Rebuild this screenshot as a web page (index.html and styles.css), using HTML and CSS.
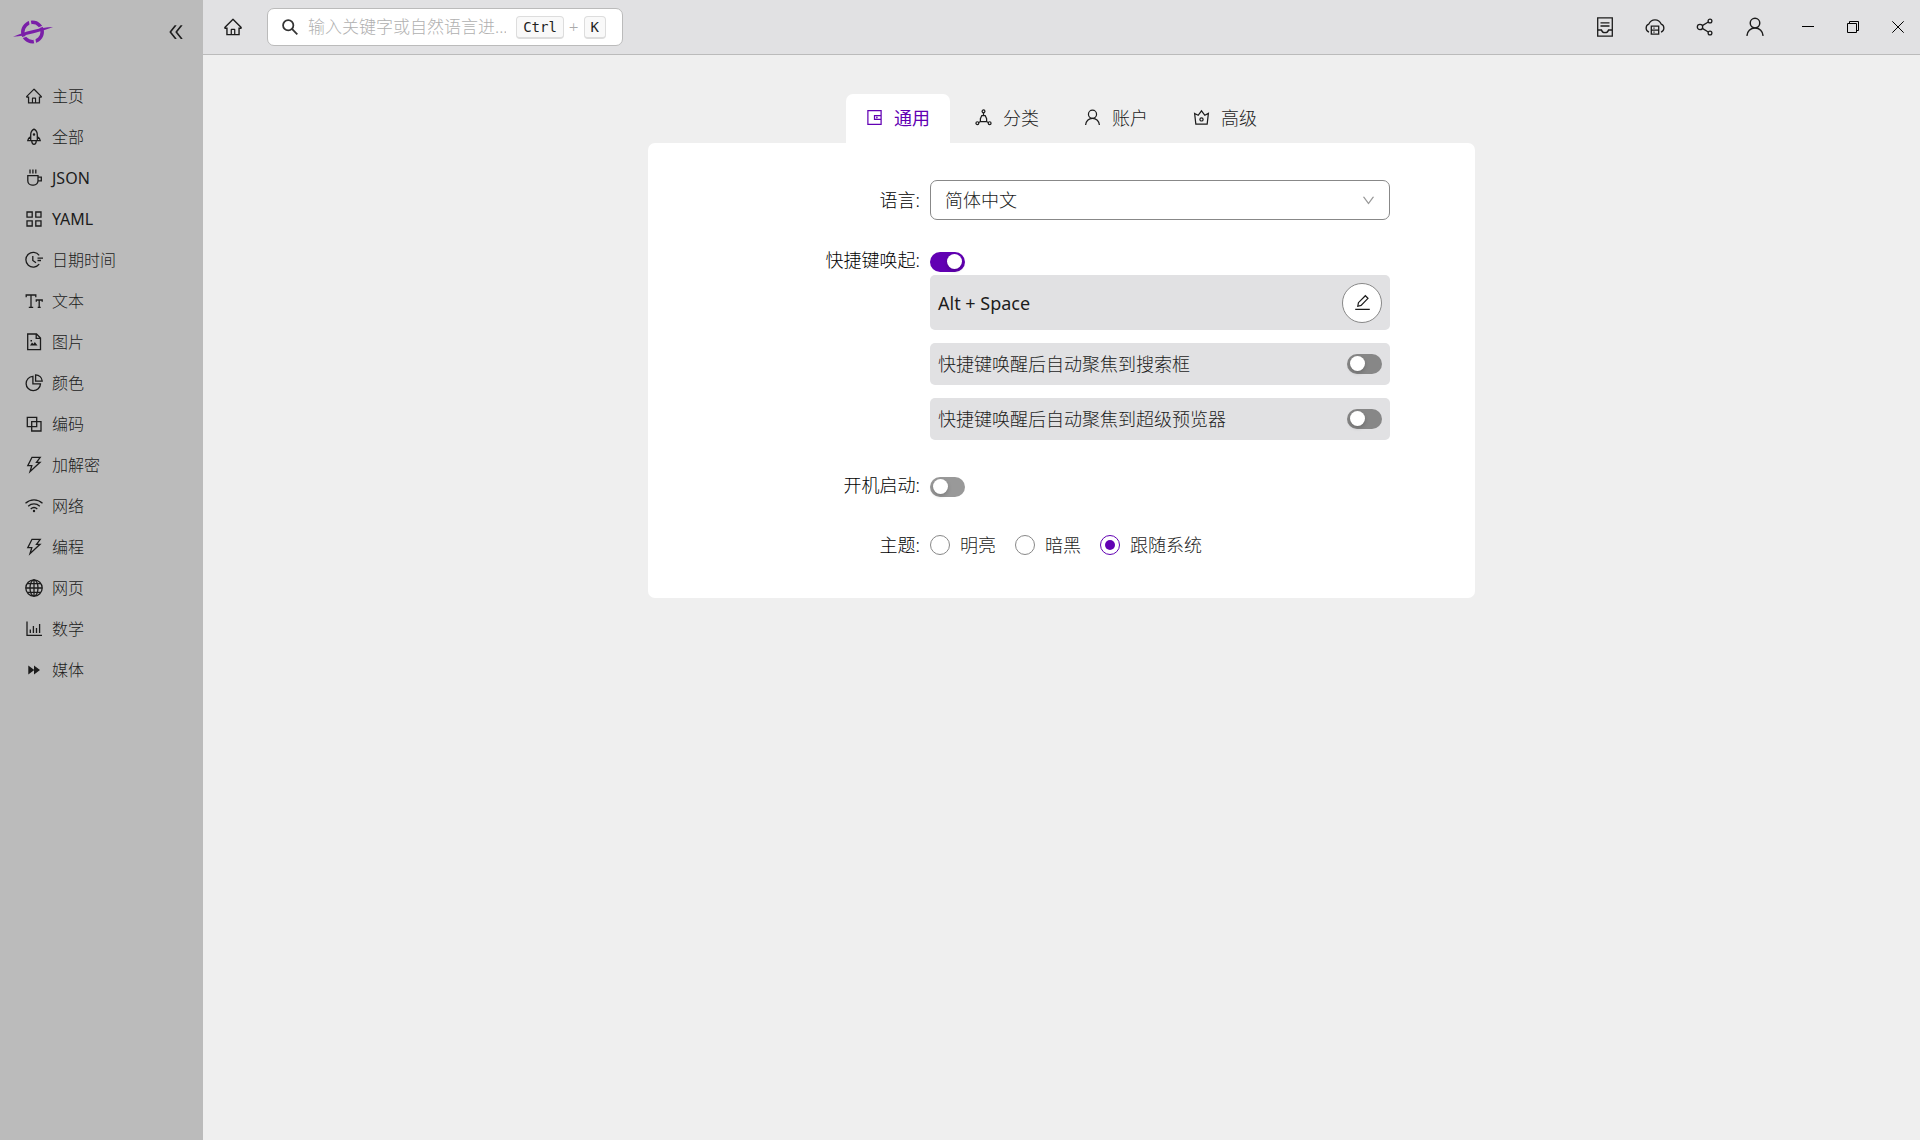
FILE: index.html
```html
<!DOCTYPE html>
<html lang="zh-CN">
<head>
<meta charset="utf-8">
<meta name="viewport" content="width=device-width, initial-scale=1">
<title>设置</title>
<link rel="stylesheet" href="styles.css">
</head>
<body>
<svg class="sprite" aria-hidden="true">
  <symbol id="home" viewBox="0 0 1024 1024"><path fill="currentColor" stroke="none" d="M946.500 505L560.100 118.800l-25.900-25.900a31.500 31.500 0 0 0-44.400 0L77.500 505a63.900 63.900 0 0 0-18.800 46c.4 35.200 29.700 63.300 64.900 63.300h42.500V940h691.800V614.300h43.400c17.100 0 33.200-6.700 45.300-18.800a63.600 63.600 0 0 0 18.700-45.300c0-17-6.700-33.100-18.800-45.200zM568 868H456V664h112v204zm217.900-325.700V868H632V640c0-22.100-17.900-40-40-40H432c-22.100 0-40 17.900-40 40v228H238.100V542.300h-96l370-369.700 23.100 23.100L882 542.300h-96.100z"/></symbol>
  <symbol id="collapse" viewBox="0 0 1024 1024"><path fill="currentColor" stroke="none" d="M272.900 512l265.400-339.100c4.100-5.200.4-12.900-6.300-12.900h-77.300c-4.900 0-9.600 2.300-12.600 6.100L186.800 492.300a32 32 0 0 0 0 39.500l255.300 326.100c3 3.900 7.700 6.100 12.600 6.100H532c6.700 0 10.400-7.700 6.300-12.900L272.900 512zm304 0l265.400-339.100c4.100-5.200.4-12.900-6.300-12.900h-77.300c-4.900 0-9.600 2.300-12.600 6.100L490.800 492.300a32 32 0 0 0 0 39.500l255.300 326.100c3 3.900 7.700 6.100 12.600 6.100H836c6.700 0 10.400-7.700 6.300-12.900L576.900 512z"/></symbol>
  <symbol id="down" viewBox="0 0 1024 1024"><path fill="currentColor" stroke="none" d="M884 256h-75c-5.100 0-9.900 2.500-12.900 6.600L512 654.200 227.900 262.600c-3-4.100-7.800-6.600-12.900-6.600h-75c-6.500 0-10.300 7.400-6.500 12.700l352.600 486.100c12.800 17.600 39 17.600 51.700 0l352.600-486.100c3.900-5.300.1-12.700-6.400-12.700z"/></symbol>
  <symbol id="rocket" viewBox="0 0 18 18"><path d="M9 1.200C7 2.200 5.700 4.400 5.700 7v5.700h6.600V7C12.300 4.400 11 2.200 9 1.200zM5.700 8.600C4 9.600 2.700 11.400 2.700 12.700h3M12.300 8.600c1.700 1 3 2.800 3 4.100h-3M6.700 13c.2 2 1 3.300 2.300 3.300s2.100-1.300 2.300-3.300"/><circle cx="9" cy="6.500" r=".6" fill="currentColor"/></symbol>
  <symbol id="coffee" viewBox="0 0 18 18"><path d="M5 .5v4M7.900.5v4M10.800.5v4M2.800 6.600H13v5.200a4.300 4.300 0 0 1-4.300 4.300H7.100a4.300 4.300 0 0 1-4.300-4.300zM13 8.200h3.300v3.600H13"/></symbol>
  <symbol id="grid" viewBox="0 0 18 18"><path d="M2 2h5.200v5.200H2zM10.800 2H16v5.200h-5.200zM2 10.800h5.200V16H2zM10.800 10.800H16V16h-5.200z"/></symbol>
  <symbol id="clock" viewBox="0 0 18 18"><path d="M14.200 4.300A7.400 7.400 0 1 0 14.200 13.200M7.800 5v4.500l3.200 2.300M12.500 7.200H18M12.500 9.500H16"/></symbol>
  <symbol id="text" viewBox="0 0 18 18"><path d="M1.200 5.300V3h9.600v2.300M6 3v12.300M3.800 15.300h4.400M11.300 9.700V8h5.900v1.700M14.200 8v7.300M12.700 15.300h3"/></symbol>
  <symbol id="image" viewBox="0 0 18 18"><path d="M2.700 1h8.800l4 4v11.700H2.700zM11.200 1v4.300h4.300"/><path fill="currentColor" stroke="none" d="M5 12.500l2-3 1.500 1.600 1.300-2 2.700 3.400zM5.500 7h1.500v1.500H5.500z"/></symbol>
  <symbol id="pie" viewBox="0 0 18 18"><path d="M7.900 2.300a7.200 7.200 0 1 0 7.600 7.600H7.900zM10.600.8v6.300h6.600A6.600 6.600 0 0 0 10.600.8z"/></symbol>
  <symbol id="overlap" viewBox="0 0 18 18"><path d="M2.300 2.300h9.400v9.400H2.300zM6.700 6.700H16V16H6.700z"/></symbol>
  <symbol id="bolt" viewBox="0 0 18 18"><path d="M7 1.300h8.200L11.500 6.300H15L5 15.700l1.800-6H2.800z"/></symbol>
  <symbol id="wifi" viewBox="0 0 18 18"><path d="M.5 6.300C5.500 1.800 12.500 1.800 17.500 6.300M3.200 9.200c3.400-3 8.200-3 11.600 0M5.700 11.900c2-1.700 4.600-1.700 6.600 0"/><circle cx="9" cy="14" r="1.200" fill="currentColor" stroke="none"/></symbol>
  <symbol id="globe" viewBox="0 0 18 18"><circle cx="9" cy="9" r="8.200"/><ellipse cx="9" cy="9" rx="4" ry="8.200"/><path d="M9 .8v16.400M.8 9h16.400M2.300 4.700h13.400M2.300 13.300h13.400"/></symbol>
  <symbol id="chart" viewBox="0 0 18 18"><path d="M2 1.500v13.800h15M5.300 13V9.500M8.400 13V6M11.500 13V8M14.600 13V4"/></symbol>
  <symbol id="forward" viewBox="0 0 18 18"><path fill="currentColor" stroke="none" d="M3.300 4.500L9 8.700V4.500L15 9l-6 4.500V9.300l-5.700 4.200z"/></symbol>
  <symbol id="user" viewBox="0 0 18 18"><circle cx="9" cy="5.500" r="4.300"/><path d="M1.700 17c.2-4 3.200-7.100 7.300-7.100s7.100 3.100 7.300 7.100"/></symbol>
  <symbol id="wallet" viewBox="0 0 18 18"><path d="M2 1.700h14v14.600H2zM16 6.900H9v4.200h7"/><circle cx="11.500" cy="9" r=".3"/></symbol>
  <symbol id="nodes" viewBox="0 0 18 18"><circle cx="9" cy="2.500" r="1.500"/><circle cx="2.500" cy="15" r="1.500"/><circle cx="15.500" cy="15" r="1.500"/><path d="M9 4v2.500M5.700 13.300V10.200L7.200 7h3.600l1.500 3.200v3.100M4 14.400l1.700-1.100h6.600l1.700 1.100"/></symbol>
  <symbol id="crown" viewBox="0 0 18 18"><path d="M1.700 4.700l3.800 2L9 2l3.500 4.700 3.800-2L15 16H3z"/><circle cx="9" cy="11" r="1.700"/></symbol>
  <symbol id="search" viewBox="0 0 18 18"><circle cx="7" cy="7" r="5.800"/><path d="M11.200 11.200l6 6"/></symbol>
  <symbol id="pencil" viewBox="0 0 18 18"><path d="M4 13l.7-3.800 7.300-7.400 2.800 2.800-7.300 7.500zM1.300 16.300h15.400"/></symbol>
  <symbol id="inbox" viewBox="0 0 20 20"><path d="M2.700.8h14.600v18.400H2.700zM5.500 5.800h9M5.500 9h9M2.700 13h3.800c.5 1.800 1.700 2.700 3.500 2.700s3-.9 3.500-2.700h3.800"/></symbol>
  <symbol id="cloud" viewBox="0 0 20 20"><path d="M4 15.200A4.300 4.300 0 0 1 3.700 7.200C4.900 4.400 7.100 2.800 10 2.800s5.100 1.600 6.300 4.400a4.300 4.300 0 0 1-.3 8"/><path d="M6.300 9.200h7.400v8H6.300zM6.300 13.200h7.400M8.400 11.200h1.200M8.400 15.200h1.200"/></symbol>
  <symbol id="share" viewBox="0 0 20 20"><circle cx="5" cy="10" r="2.700"/><circle cx="15" cy="4" r="1.900"/><circle cx="15" cy="16" r="1.900"/><path d="M7.300 8.600l6-3.600M7.300 11.400l6 3.600"/></symbol>
  <symbol id="minimize" viewBox="0 0 12 12"><path d="M0 5.500h12"/></symbol>
  <symbol id="restore" viewBox="0 0 12 12"><path d="M.5 2.500h9v9h-9zM2.500 2.500v-2h9v9h-2"/></symbol>
  <symbol id="close" viewBox="0 0 12 12"><path d="M.3.300l11.400 11.400M11.700.3L.3 11.700"/></symbol>
</svg>
<div class="app">
  <aside class="sidebar">
    <div class="brand">
      <svg class="logo" viewBox="0 0 40 24" aria-label="Logo"><circle cx="19.500" cy="12" r="9.700" fill="none" stroke="#7a1fa8" stroke-width="3.500"/><path d="M16.500-1l1.500 8M21 17l1.500 8" stroke="#bbb" stroke-width="2"/><path d="M8 18l7-2.300M24 8.500l7.500-3" stroke="#bbb" stroke-width="1.200"/><path d="M0 16.800C11 11.700 27 7.500 40 7 30 11 14 15.800 0 16.800z" fill="#7a1fa8"/></svg>
      <button class="collapse" type="button" aria-label="收起"><svg class="icon"><use href="#collapse"/></svg></button>
    </div>
    <nav>
      <ul class="menu">
        <li><a href="#"><svg class="icon"><use href="#home"/></svg>主页</a></li>
        <li><a href="#"><svg class="icon"><use href="#rocket"/></svg>全部</a></li>
        <li><a href="#" class="latin"><svg class="icon"><use href="#coffee"/></svg>JSON</a></li>
        <li><a href="#" class="latin"><svg class="icon"><use href="#grid"/></svg>YAML</a></li>
        <li><a href="#"><svg class="icon"><use href="#clock"/></svg>日期时间</a></li>
        <li><a href="#"><svg class="icon"><use href="#text"/></svg>文本</a></li>
        <li><a href="#"><svg class="icon"><use href="#image"/></svg>图片</a></li>
        <li><a href="#"><svg class="icon"><use href="#pie"/></svg>颜色</a></li>
        <li><a href="#"><svg class="icon"><use href="#overlap"/></svg>编码</a></li>
        <li><a href="#"><svg class="icon"><use href="#bolt"/></svg>加解密</a></li>
        <li><a href="#"><svg class="icon"><use href="#wifi"/></svg>网络</a></li>
        <li><a href="#"><svg class="icon"><use href="#bolt"/></svg>编程</a></li>
        <li><a href="#"><svg class="icon"><use href="#globe"/></svg>网页</a></li>
        <li><a href="#"><svg class="icon"><use href="#chart"/></svg>数学</a></li>
        <li><a href="#"><svg class="icon"><use href="#forward"/></svg>媒体</a></li>
      </ul>
    </nav>
  </aside>
  <div class="page">
    <header class="topbar">
      <button class="tool" type="button" aria-label="主页"><svg class="icon"><use href="#home"/></svg></button>
      <label class="search">
        <svg class="icon"><use href="#search"/></svg>
        <input type="text" placeholder="输入关键字或自然语言进..." aria-label="搜索">
        <span class="keys"><kbd>Ctrl</kbd>+<kbd>K</kbd></span>
      </label>
      <div class="tools">
        <button class="tool" type="button" aria-label="收件箱"><svg class="icon"><use href="#inbox"/></svg></button>
        <button class="tool" type="button" aria-label="云端"><svg class="icon"><use href="#cloud"/></svg></button>
        <button class="tool" type="button" aria-label="分享"><svg class="icon"><use href="#share"/></svg></button>
        <button class="tool" type="button" aria-label="账户"><svg class="icon"><use href="#user"/></svg></button>
      </div>
      <div class="window">
        <button type="button" aria-label="最小化"><svg><use href="#minimize"/></svg></button>
        <button type="button" aria-label="还原"><svg><use href="#restore"/></svg></button>
        <button type="button" aria-label="关闭"><svg><use href="#close"/></svg></button>
      </div>
    </header>
    <main class="settings">
      <div class="tabs" role="tablist">
        <button class="tab active" type="button" role="tab" aria-selected="true"><svg class="icon"><use href="#wallet"/></svg>通用</button>
        <button class="tab" type="button" role="tab" aria-selected="false"><svg class="icon"><use href="#nodes"/></svg>分类</button>
        <button class="tab" type="button" role="tab" aria-selected="false"><svg class="icon"><use href="#user"/></svg>账户</button>
        <button class="tab" type="button" role="tab" aria-selected="false"><svg class="icon"><use href="#crown"/></svg>高级</button>
      </div>
      <form class="card">
        <label class="name" for="lang">语言:</label>
        <div class="select">
          <select id="lang"><option>简体中文</option></select>
          <svg class="arrow"><use href="#down"/></svg>
        </div>

        <label class="name" for="hotkey">快捷键唤起:</label>
        <div class="hotkey">
          <div class="line"><input class="switch" type="checkbox" id="hotkey" checked></div>
          <div class="boxes">
            <div class="box"><span class="latin">Alt + Space</span><button class="edit" type="button" aria-label="编辑"><svg class="icon"><use href="#pencil"/></svg></button></div>
            <label class="box"><span>快捷键唤醒后自动聚焦到搜索框</span><input class="switch" type="checkbox"></label>
            <label class="box"><span>快捷键唤醒后自动聚焦到超级预览器</span><input class="switch" type="checkbox"></label>
          </div>
        </div>

        <label class="name" for="boot">开机启动:</label>
        <div class="line"><input class="switch" type="checkbox" id="boot"></div>

        <span class="name" id="theme">主题:</span>
        <div class="radios" role="radiogroup" aria-labelledby="theme">
          <label><input type="radio" name="theme">明亮</label>
          <label><input type="radio" name="theme">暗黑</label>
          <label><input type="radio" name="theme" checked>跟随系统</label>
        </div>
      </form>
    </main>
  </div>
</div>
</body>
</html>
```
FILE: styles.css
```css
* { box-sizing: border-box; }

:root {
  --ink: #1c1c1c;
  --accent: #6200b3;
  --panel: #e1e1e3;
}

body {
  margin: 0;
  font: 300 18px/24px "Noto Sans", "Noto Sans CJK SC", sans-serif;
  color: var(--ink);
  background: #efefef;
}

button, input, select { font: inherit; color: inherit; }
button { border: 0; padding: 0; background: none; cursor: pointer; }
input { margin: 0; }
svg { display: block; fill: none; stroke: currentColor; }
.sprite { display: none; }
.icon { width: 18px; height: 18px; flex: none; stroke-width: 1.3; }
.latin { font-weight: 400; }

.app { display: grid; grid-template-columns: 203px 1fr; min-height: 100vh; }

.sidebar { background: #bbb; font-size: 16px; }
.brand { display: flex; align-items: center; justify-content: space-between; height: 64px; padding: 0 17px 0 13px; }
.logo { width: 40px; height: 24px; stroke: none; }
.collapse .icon { width: 20px; height: 20px; }
.menu { list-style: none; margin: 0; padding: 11px 0 0; }
.menu a { display: flex; align-items: center; gap: 9px; height: 41px; padding-left: 25px; color: inherit; text-decoration: none; }

.topbar { display: flex; align-items: center; height: 55px; padding-left: 5px; background: var(--panel); border-bottom: 1px solid #bbb; }
.tool { display: grid; place-items: center; width: 50px; height: 54px; }
.tool .icon { width: 20px; height: 20px; }
.search { display: flex; align-items: center; gap: 10px; width: 356px; height: 38px; margin-left: 9px; padding: 0 16px 0 14px; border: 1px solid #bbb; border-radius: 7px; background: #fff; font-size: 17px; color: #aaa; }
.search .icon { width: 16px; height: 16px; color: #333; stroke-width: 2; }
.search input { flex: 1; min-width: 0; padding: 0; border: 0; outline: 0; background: none; }
.search input::placeholder { color: #b0b0b0; opacity: 1; }
.keys { display: flex; align-items: center; gap: 5px; }
kbd { padding: 0 6px; border: 1px solid #ddd; border-bottom-width: 2px; border-radius: 4px; background: #f9f9f9; color: #222; font: 400 14px/20px "DejaVu Sans Mono", monospace; }
.tools { display: flex; margin-left: auto; }
.window { display: flex; margin-left: 5px; }
.window button { display: grid; place-items: center; width: 45px; height: 54px; color: #000; }
.window svg { width: 12px; height: 12px; }

.settings { display: flex; flex-direction: column; align-items: center; padding-top: 39px; }
.tabs { display: flex; gap: 5px; }
.tab { display: flex; align-items: center; gap: 11px; height: 49px; padding: 0 20px 2px; border-radius: 7px 7px 0 0; }
.tab.active { background: #fff; color: var(--accent); font-weight: 400; }
.tab .icon { width: 17px; height: 17px; }

.card { display: grid; grid-template-columns: 272px 1fr; gap: 20px 10px; width: 100%; max-width: 827px; padding: 37px 85px 33px 0; border-radius: 7px; background: #fff; }
.name { line-height: 40px; text-align: right; color: #000; }

.select { display: grid; align-items: center; }
.select > * { grid-area: 1 / 1; }
.select select { width: 100%; height: 40px; padding: 0 14px; border: 1px solid #888; border-radius: 7px; background: #fff; appearance: none; }
.arrow { justify-self: end; width: 15px; height: 15px; margin-right: 14px; color: #999; pointer-events: none; }

.line { height: 35px; padding-top: 12px; }
.hotkey { padding-bottom: 5px; }
.boxes { display: grid; gap: 13px; }
.box { display: flex; align-items: center; justify-content: space-between; min-height: 42px; padding: 0 8px; border-radius: 5px; background: var(--panel); }
div.box { min-height: 55px; }

.switch { display: block; flex: none; width: 35px; height: 20px; padding: 2px 3px; border-radius: 10px; background: #999; appearance: none; cursor: pointer; }
.switch::before { content: ""; display: block; width: 15px; height: 15px; border-radius: 50%; background: #fff; box-shadow: 0 2px 4px rgb(0 0 0 / 20%); }
.switch:checked { background: var(--accent); }
.switch:checked::before { margin-left: auto; }
.box .switch { background: #878787; }

.edit { display: grid; place-items: center; width: 40px; height: 40px; border: 1px solid #888; border-radius: 50%; background: #fff; }
.edit .icon { width: 17px; height: 17px; }

.radios { display: flex; align-items: center; gap: 19px; height: 40px; }
.radios label { display: flex; align-items: center; gap: 10px; }
.radios input { display: grid; place-items: center; width: 20px; height: 20px; border: 1px solid #888; border-radius: 50%; background: #fff; appearance: none; }
.radios input:checked { border-color: var(--accent); }
.radios input:checked::before { content: ""; width: 10px; height: 10px; border-radius: 50%; background: var(--accent); }
```
